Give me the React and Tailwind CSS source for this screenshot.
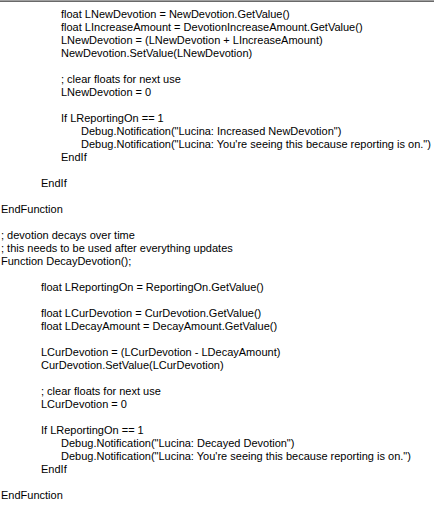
const lines = [
  [3, 'float LNewDevotion = NewDevotion.GetValue()'],
  [3, 'float LIncreaseAmount = DevotionIncreaseAmount.GetValue()'],
  [3, 'LNewDevotion = (LNewDevotion + LIncreaseAmount)'],
  [3, 'NewDevotion.SetValue(LNewDevotion)'],
  [0, ''],
  [3, '; clear floats for next use'],
  [3, 'LNewDevotion = 0'],
  [0, ''],
  [3, 'If LReportingOn == 1'],
  [4, 'Debug.Notification("Lucina: Increased NewDevotion")'],
  [4, 'Debug.Notification("Lucina: You\'re seeing this because reporting is on.")'],
  [3, 'EndIf'],
  [0, ''],
  [2, 'EndIf'],
  [0, ''],
  [0, 'EndFunction'],
  [0, ''],
  [0, '; devotion decays over time'],
  [0, '; this needs to be used after everything updates'],
  [0, 'Function DecayDevotion();'],
  [0, ''],
  [2, 'float LReportingOn = ReportingOn.GetValue()'],
  [0, ''],
  [2, 'float LCurDevotion = CurDevotion.GetValue()'],
  [2, 'float LDecayAmount = DecayAmount.GetValue()'],
  [0, ''],
  [2, 'LCurDevotion = (LCurDevotion - LDecayAmount)'],
  [2, 'CurDevotion.SetValue(LCurDevotion)'],
  [0, ''],
  [2, '; clear floats for next use'],
  [2, 'LCurDevotion = 0'],
  [0, ''],
  [2, 'If LReportingOn == 1'],
  [3, 'Debug.Notification("Lucina: Decayed Devotion")'],
  [3, 'Debug.Notification("Lucina: You\'re seeing this because reporting is on.")'],
  [2, 'EndIf'],
  [0, ''],
  [0, 'EndFunction'],
];

const indents = ['pl-px', 'pl-[21px]', 'pl-[41px]', 'pl-[61px]', 'pl-[81px]'];

export default function App() {
  return (
    <div className="w-[434px] h-[507px] overflow-hidden bg-white border-t border-[#a0a0a0]">
      <div className="h-px bg-[#696969]" />
      <div className="pt-[6px] text-[11px] leading-[13px] text-black font-['Tahoma','Liberation_Sans',sans-serif]">
        {lines.map(([lvl, text], i) => (
          <div key={i} className={`h-[13px] whitespace-pre ${indents[lvl]}`}>
            {text}
          </div>
        ))}
      </div>
    </div>
  );
}
